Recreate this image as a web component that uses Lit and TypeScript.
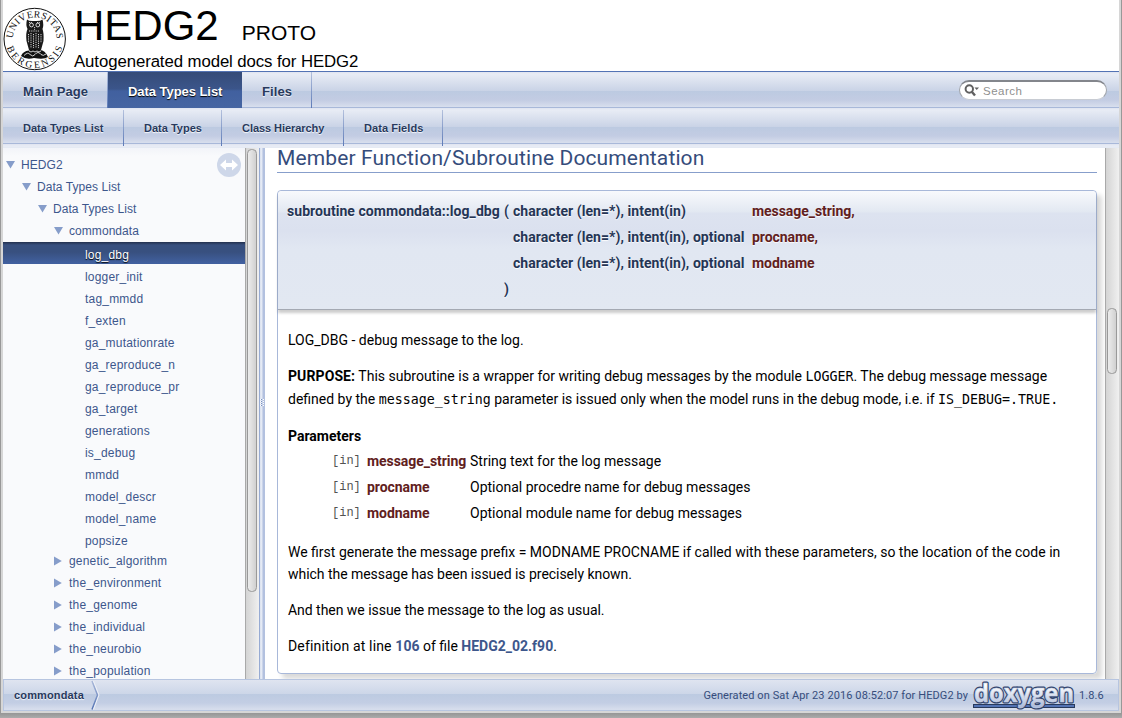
import { LitElement, html, svg, css } from "lit";
import { customElement } from "lit/decorators.js";
import { classMap } from "lit/directives/class-map.js";

interface Node { label: string; depth: number; kind: "open" | "closed" | "leaf"; selected?: boolean }

const leaf = (label: string, selected = false): Node => ({ label, depth: 4, kind: "leaf", selected });
const closed = (label: string): Node => ({ label, depth: 3, kind: "closed" });

const TREE: Node[] = [
  { label: "HEDG2", depth: 0, kind: "open" },
  { label: "Data Types List", depth: 1, kind: "open" },
  { label: "Data Types List", depth: 2, kind: "open" },
  { label: "commondata", depth: 3, kind: "open" },
  leaf("log_dbg", true),
  ...["logger_init", "tag_mmdd", "f_exten", "ga_mutationrate", "ga_reproduce_n", "ga_reproduce_pr", "ga_target",
    "generations", "is_debug", "mmdd", "model_descr", "model_name", "popsize"].map((l) => leaf(l)),
  ...["genetic_algorithm", "the_environment", "the_genome", "the_individual", "the_neurobio", "the_population"].map(closed),
];

@customElement("uni-seal")
class UniSeal extends LitElement {
  static styles = css`
    :host { display: block; width: 64px; height: 64px; }
    svg { display: block; }
    text { font-family: "Liberation Serif", serif; font-size: 9.8px; fill: #111; }
  `;
  render() {
    return html`<svg width="64" height="64" viewBox="0 0 64 64">
      <defs>
        <path id="top" d="M9.700 32.500 A22 22 0 0 1 53.700 32.500" fill="none"/>
        <path id="bottom" d="M2.700 32 A29 29 0 0 0 60.700 32" fill="none"/>
      </defs>
      <circle cx="31.7" cy="32" r="30.7" fill="#fff" stroke="#111" stroke-width="1"/>
      <text><textPath href="#top" startOffset="1" textLength="67">UNIVERSITAS</textPath></text>
      <text><textPath href="#bottom" startOffset="8.500" textLength="74">BERGENSIS</textPath></text>
      <path d="M24 12.500 Q26 14.500 31.500 14 Q37 14.500 39.500 12.500 Q41 18 39.500 22 Q41 26 40.500 34 L38 43 H26 L23.500 34 Q22.500 26 24.500 22 Q22.500 18 24 12.500Z" fill="#1a1a1a"/>
      <path d="M18 49 Q20 44 26 43.500 Q31 41 37 43 Q42 43 45 50 Q41 53 31 51 Q23 53 18 49Z" fill="#111"/>
      <g stroke="#fff" fill="none" stroke-width=".8">
        <circle cx="28.500" cy="18" r="1.900"/><circle cx="34.800" cy="18" r="1.900"/>
        <path d="M31.600 20v3M26 24h11M26 15.500h3M34 15.500h3M25.500 27v9M28 26v15M30.500 27v14M33 26v15M35.500 27v14M38 27v9" stroke-dasharray="1.200 1"/>
        <path d="M21 48.500q4-4 6-1q3 3 5 0q3-4 6 0q2 2 5-.5M26 44q2 2 4 0q2 2 4 0q2 2 4 0"/>
      </g>
    </svg>`;
  }
}

@customElement("doxygen-logo")
class DoxygenLogo extends LitElement {
  static styles = css`
    :host { display: block; width: 104px; height: 29px; }
    svg { display: block; overflow: visible; }
    text { font-family: "Open Sans", sans-serif; font-weight: 700; font-size: 25px; stroke-linejoin: round; }
  `;
  render() {
    return html`<svg width="104" height="29" viewBox="0 0 104 29">
      <defs><linearGradient id="g" gradientUnits="userSpaceOnUse" x1="0" y1="2" x2="0" y2="27">
        <stop offset="0.1" stop-color="#fff"/><stop offset="1" stop-color="#a9b8d9"/></linearGradient></defs>
      <rect x=".5" y="23.500" width="101" height="3" fill="#5373b4" stroke="#283a5d"/>
      <text x="1" y="21" textLength="100" lengthAdjust="spacingAndGlyphs" fill="#23304d" stroke="#33456c" stroke-width="3">doxygen</text>
      <text x="1" y="21" textLength="100" lengthAdjust="spacingAndGlyphs" fill="url(#g)" stroke="#c6d0e6" stroke-width=".5">doxygen</text>
    </svg>`;
  }
}

@customElement("nav-tree")
class NavTree extends LitElement {
  static styles = css`
    :host { display: block; position: relative; width: 242px; box-sizing: border-box; padding-top: 6px; overflow: hidden;
      background: linear-gradient(#f2f4f9, #f9fafc 8px);
      font: 12px/22px "Liberation Sans", Arial, sans-serif; color: #3d578c; letter-spacing: .2px; }
    .row { display: flex; height: 22px; white-space: nowrap; }
    .open { letter-spacing: .06px; }
    .arrow { width: 16px; height: 22px; flex: none; margin-left: 2px; }
    .arrow svg { display: block; }
    .leaf .text { padding-top: 2px; margin-left: 18px; line-height: 20px; }
    .leaf .text { line-height: 22px; }
    .selected { background: linear-gradient(#23304d, #38507f 3px, #38507f 10px, #41609f 21px);
      color: #fff; text-shadow: 0 1px 1px #000; }
    .indent { flex: none; }
    .sync { position: absolute; right: 4px; top: 5px; }
  `;
  render() {
    return html`
      ${TREE.map((n) => html`<div class=${classMap({ row: true, leaf: n.kind === "leaf", open: n.kind === "open", selected: !!n.selected })}>
        <span class="indent" style="width:${n.depth * 16}px"></span>
        ${n.kind === "leaf" ? "" : html`<span class="arrow"><svg width="16" height="22">
          <path d=${n.kind === "open" ? "M1 7H10L5.500 14.500Z" : "M1 6.500V15.500L8.800 11Z"} fill="#869dca"/></svg></span>`}
        <span class="text">${n.label}</span></div>`)}
      <svg class="sync" width="24" height="24"><circle cx="12" cy="12" r="12" fill="#ced7e9"/>
        <path d="M3 12L9 6.500V10H15V6.500L21 12L15 17.500V14H9V17.500Z" fill="#fff"/></svg>`;
  }
}

@customElement("scroll-bar")
class ScrollBar extends LitElement {
  static styles = css`
    :host { display: block; width: 14px; box-sizing: border-box; flex: none; border-left: 1px solid #a9a9a9; padding: 1px 2px 0 1px;
      background: linear-gradient(90deg, #d4d4d4, #f0f0f0); }
    .thumb { height: var(--thumb); margin-top: var(--offset, 0px); box-sizing: border-box; border: 1px solid #999; border-radius: 4.5px;
      background: linear-gradient(90deg, #ececec, #d0d0d0); }
  `;
  render() { return html`<div class="thumb"></div>`; }
}

@customElement("app-root")
export class AppRoot extends LitElement {
  static styles = css`
    :host { display: block; width: 1122px; height: 718px; overflow: hidden; background: linear-gradient(#959595, #ababab) bottom / 100% 5px no-repeat #d4d4d4; }
    * { box-sizing: border-box; }
    .window { height: 714px; border: 1px solid #989898; border-top: 0; padding: 0 2px; background: #d6d6d6; }
    .page { width: 1116px; height: 711px; background: #fff; display: flex; flex-direction: column; }
    .masthead { height: 72px; flex: none; border-bottom: 1px solid #5373b4; display: flex; font-family: "Liberation Sans", Arial, sans-serif; color: #000; }
    uni-seal { margin-top: 7px; flex: none; }
    .names { padding-left: 7px; }
    .project { height: 51px; padding-top: 1px; font-size: 42px; line-height: 50px; white-space: pre; }
    .number { font-size: 21px; margin-left: 23px; }
    .brief { font-size: 16.8px; line-height: 20px; margin-top: 1px; letter-spacing: -.09px; white-space: nowrap; }
    .tabs { display: flex; flex: none; font: bold 13px/38px "Liberation Sans", Arial, sans-serif; color: #283a5d; text-shadow: 0 1px 1px rgba(255,255,255,.9);
      background: linear-gradient(#dfe4f0, #e8ecf5 2px, #c9d3e6 19px, #bccae1 19px, #c3cce3 28px, #d5dcec 34px, #d8dfee 35px, #a8b8d9 35px) 0 0 / 100% 36px; }
    .row1 { height: 36px; line-height: 39px; }
    .row2 { height: 40px; padding-top: 2px; font-size: 11px; line-height: 37px; }
    .tab { height: 36px; padding: 0 20px; white-space: nowrap; border-right: 1px solid; border-image: linear-gradient(#b6c3de, #5a78b6) 1; }
    .t1 { width: 105px; letter-spacing: .1px; } .t2 { width: 134px; letter-spacing: -.05px; } .t3 { width: 70px; letter-spacing: .1px; }
    .s1 { width: 121px; } .s2 { width: 98px; } .s3 { width: 122px; letter-spacing: -.06px; } .s4 { width: 99px; letter-spacing: .06px; }
    .active { color: #fff; background: linear-gradient(#354b78, #3b558a 17px, #41609f 19px, #4665a2); text-shadow: 0 1px 1px #000; border: 0; }
    .search { margin: 8px 12px 0 auto; width: 148px; height: 20px; border-radius: 10px; border: 1px solid #a0a4ab; border-top: 2px solid #83868c; border-bottom-color: #c8ccd3;
      background: #fff; display: flex; align-items: center; padding-left: 4px; font: 11.5px/18px "Liberation Sans", Arial, sans-serif; letter-spacing: .5px; color: #909090; text-shadow: none; }
    .search svg { margin-right: 3px; }
    .search span { margin-top: 1px; }
    .middle { flex: 1; min-height: 0; display: flex; overflow: hidden; }
    .side { display: flex; }
    .navbar { --thumb: 443px; }
    .split { width: 6px; flex: none; background: linear-gradient(90deg, #97abd3 1px, #d4dcec 1px, #e8edf6 2px, #e3e8f3 3px, #b3c1df 4px, #b3c1df 6px); display: flex; align-items: center; }
    .split svg { display: block; margin-top: -22px; }
    .docbar { --thumb: 66px; --offset: 159px; }
    .content { flex: 1; padding: 0 8px 0 12px; color: #000; font: 14px/22px Roboto, sans-serif; overflow: hidden; }
    h2 { margin: 0; height: 25px; border-bottom: 1px solid #879ecb; color: #354c7b; font: 400 21px/20px Roboto, sans-serif; letter-spacing: .125px; }
    .member { margin-top: 17px; height: 484px; border: 1px solid #a8b8d9; border-radius: 4px; box-shadow: 5px 5px 5px rgba(0,0,0,.15); }
    .proto { height: 119px; border-bottom: 1px solid #a4a9b3; box-shadow: 0 3px 3px rgba(0,0,0,.2); border-radius: 4px 4px 0 0; padding: 7px 9px; color: #253555; font-weight: 700; text-shadow: 0 1px 1px rgba(255,255,255,.9);
      background: linear-gradient(#f8f9fc, #e2e8f2 21px, #dde3f0 22px, #dbe1ef 40px, #e1e7f2 58px, #e2e8f2);
      display: grid; grid-template-columns: 217px 9px 239px 1fr; grid-auto-rows: 26px; line-height: 26px; white-space: nowrap; letter-spacing: .055px; }
    .name { color: #602020; letter-spacing: -.05px; }
    .doc { padding: 19px 10px 0; }
    p { margin: 0 0 14px; white-space: nowrap; }
    .purpose { line-height: 23px; margin: -.5px 0 14.5px; height: 45.5px; }
    .purpose b { letter-spacing: .1px; }
    code { font: 13.3px/20px "DejaVu Sans Mono", monospace; }
    .params { display: grid; grid-template-columns: 35px 103px 1fr; grid-auto-rows: 26px; line-height: 26px; padding-left: 44px; margin: 1px 0 15px; }
    .dir { font: 12px/26px "Liberation Mono", monospace; color: #525252; }
    .head { margin: 0; font-weight: 700; }
    .last { letter-spacing: -.035px; }
    .deflead { letter-spacing: .16px; }
    .link { color: #3d578c; font-weight: 700; }
    .footer { flex: none; height: 32px; border: 1px solid #b7c5e0; display: flex; align-items: center;
      background: linear-gradient(#dfe4f0, #ccd6e8 14px, #bccae1 14px, #c3cee4 23px, #d6ddec 29px); font: 11px/30px Roboto, sans-serif; color: #364d7c; }
    .crumb { padding-left: 10px; width: 81px; font: bold 11px/30px "Liberation Sans", Arial, sans-serif; letter-spacing: .15px; color: #283a5d; text-shadow: 0 1px 1px rgba(255,255,255,.9); }
    .crumb-arrow { margin-left: 6px; flex: none; }
    .generated { margin-left: auto; margin-right: 5px; letter-spacing: .09px; white-space: nowrap; padding-top: 2px; }
    .version { width: 41px; padding: 2px 0 0 2px; letter-spacing: .1px; }
    doxygen-logo { flex: none; margin-top: 1px; }
  `;
  render() {
    return html`<div class="window"><div class="page">
      <header class="masthead"><uni-seal></uni-seal>
        <div class="names"><div class="project">HEDG2<span class="number">PROTO</span></div>
          <div class="brief">Autogenerated model docs for HEDG2</div></div></header>
      <nav class="tabs row1"><div class="tab t1">Main Page</div><div class="tab t2 active">Data Types List</div><div class="tab t3">Files</div>
        <div class="search"><svg width="16" height="14"><circle cx="5.300" cy="5" r="3.700" fill="none" stroke="#606060" stroke-width="2"/><path d="M8 8L11 11.500" stroke="#606060" stroke-width="2.400"/><path d="M10.500 3.500H15L12.700 6Z" fill="#606060"/></svg><span>Search</span></div></nav>
      <nav class="tabs row2"><div class="tab s1">Data Types List</div><div class="tab s2">Data Types</div><div class="tab s3">Class Hierarchy</div><div class="tab s4">Data Fields</div></nav>
      <div class="middle">
        <div class="side"><nav-tree></nav-tree><scroll-bar class="navbar"></scroll-bar>
          <div class="split"><svg width="6" height="8">${[0, 2, 4, 6].map((y) => svg`<path d="M1 ${y + .5}h1m2 0h1" stroke="#fff"/><path d="M2 ${y + .5}h1" stroke="#7890c0"/>`)}</svg></div></div>
        <main class="content">
          <h2>Member Function/Subroutine Documentation</h2>
          <section class="member">
            <div class="proto">
              <span>subroutine commondata::log_dbg</span><span>(</span><span>character (len=*), intent(in)</span><span class="name">message_string,</span>
              <span></span><span></span><span>character (len=*), intent(in), optional</span><span class="name">procname,</span>
              <span></span><span></span><span>character (len=*), intent(in), optional</span><span class="name">modname</span>
              <span></span><span>)</span>
            </div>
            <div class="doc">
              <p>LOG_DBG - debug message to the log.</p>
              <p class="purpose"><b>PURPOSE:</b> This subroutine is a wrapper for writing debug messages by the module <code>LOGGER</code>. The debug message message<br>defined by the <code>message_string</code> parameter is issued only when the model runs in the debug mode, i.e. if <code>IS_DEBUG=.TRUE.</code></p>
              <p class="head">Parameters</p>
              <div class="params">
                <span class="dir">[in]</span><b class="name">message_string</b><span>String text for the log message</span>
                <span class="dir">[in]</span><b class="name">procname</b><span>Optional procedre name for debug messages</span>
                <span class="dir">[in]</span><b class="name">modname</b><span>Optional module name for debug messages</span>
              </div>
              <p>We first generate the message prefix = MODNAME PROCNAME if called with these parameters, so the location of the code in<br><span class="last">which the message has been issued is precisely known.</span></p>
              <p class="last">And then we issue the message to the log as usual.</p>
              <p><span class="deflead">Definition at line </span><span class="link">106</span> of file <span class="link">HEDG2_02.f90</span>.</p>
            </div>
          </section>
        </main>
        <scroll-bar class="docbar"></scroll-bar>
      </div>
      <footer class="footer"><span class="crumb">commondata</span>
        <svg class="crumb-arrow" width="9" height="30"><defs><linearGradient id="c" x1="0" y1="0" x2="0" y2="1"><stop offset="0" stop-color="#a9b8d9"/><stop offset="1" stop-color="#5474b4"/></linearGradient></defs><path d="M1 1L6.500 15L1 29.500" fill="none" stroke="url(#c)" stroke-width="1.500"/><path d="M2.500 1L8 15L2.500 29.500" fill="none" stroke="#eef1f8"/></svg>
        <span class="generated">Generated on Sat Apr 23 2016 08:52:07 for HEDG2 by</span><doxygen-logo></doxygen-logo><span class="version">1.8.6</span></footer>
    </div></div>`;
  }
}
